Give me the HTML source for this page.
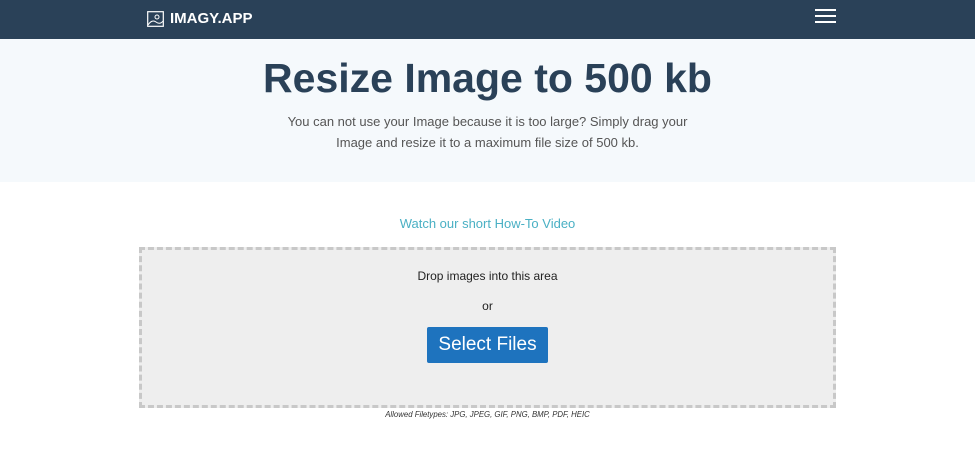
<!DOCTYPE html>
<html><head><meta charset="utf-8"><style>
*{margin:0;padding:0;box-sizing:border-box}
body{width:975px;height:456px;overflow:hidden;background:#fff;font-family:"Liberation Sans",sans-serif}
.nav{height:39px;background:#2a4158;position:relative}
.logo{position:absolute;left:147px;top:10px;color:#fff;font-weight:bold;font-size:15px;display:flex;align-items:center;gap:6px}
.burger{position:absolute;left:815px;top:9px;width:21px}
.burger div{height:2px;background:#fff;margin-bottom:4px}
.hero{background:#f5f9fc;height:143px;text-align:center}
h1{color:#2a4158;font-size:41px;font-weight:bold;padding-top:19px;line-height:1}
.sub{color:#555;font-size:13px;line-height:21px;padding-top:12px}
.watch{text-align:center;color:#4ab0c4;font-size:13px;margin-top:34px}
.drop{position:absolute;left:139px;top:247px;width:697px;height:161px;border:3px dashed #c8c8c8;background:#eee;text-align:center;color:#222;font-size:12px}
.btn{display:inline-block;background:#1e73be;color:#fff;font-size:19px;width:121px;height:36px;line-height:36px;margin-top:14px;border-radius:2px}
.allowed{position:absolute;top:410px;left:0;width:975px;text-align:center;font-size:7.8px;font-style:italic;color:#333}
</style></head><body>
<div class="nav"><div class="logo"><svg width="17" height="16" viewBox="0 0 17 16"><rect x="0.7" y="0.7" width="15.6" height="14.6" fill="none" stroke="#fff" stroke-width="1.2"/><circle cx="10" cy="6" r="2" fill="none" stroke="#fff"/><path d="M1 14 Q5 8 9 11 T16 10" fill="none" stroke="#fff"/></svg>IMAGY.APP</div>
<div class="burger"><div></div><div></div><div></div></div></div>
<div class="hero"><h1>Resize Image to 500 kb</h1>
<div class="sub">You can not use your Image because it is too large? Simply drag your<br>Image and resize it to a maximum file size of 500 kb.</div></div>
<div class="watch">Watch our short How-To Video</div>
<div class="drop"><div style="margin-top:19px">Drop images into this area</div><div style="margin-top:16px">or</div><div class="btn">Select Files</div></div>
<div class="allowed">Allowed Filetypes: JPG, JPEG, GIF, PNG, BMP, PDF, HEIC</div>
</body></html>
